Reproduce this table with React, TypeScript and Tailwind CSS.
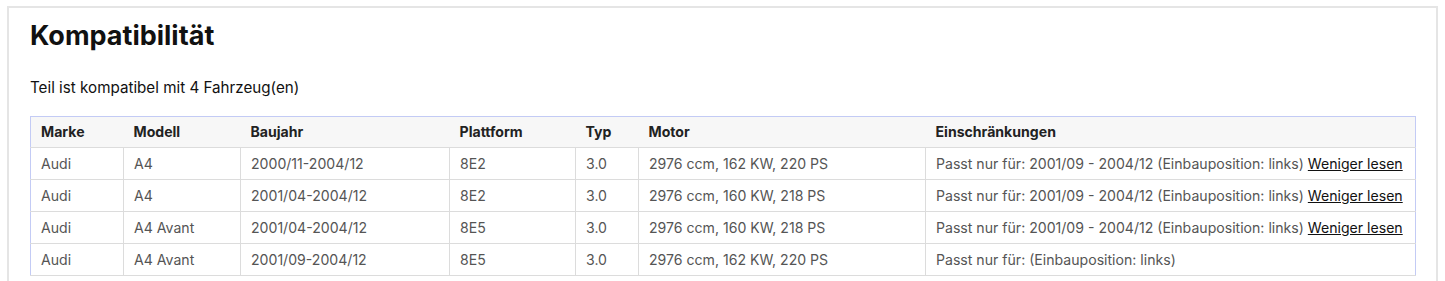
import React from "react";

const rows = [
  ["Audi", "A4", "2000/11-2004/12", "8E2", "3.0", "2976 ccm, 162 KW, 220 PS", "Passt nur für: 2001/09 - 2004/12 (Einbauposition: links)", true],
  ["Audi", "A4", "2001/04-2004/12", "8E2", "3.0", "2976 ccm, 160 KW, 218 PS", "Passt nur für: 2001/09 - 2004/12 (Einbauposition: links)", true],
  ["Audi", "A4 Avant", "2001/04-2004/12", "8E5", "3.0", "2976 ccm, 160 KW, 218 PS", "Passt nur für: 2001/09 - 2004/12 (Einbauposition: links)", true],
  ["Audi", "A4 Avant", "2001/09-2004/12", "8E5", "3.0", "2976 ccm, 162 KW, 220 PS", "Passt nur für: (Einbauposition: links)", false],
] as const;

const headers = ["Marke", "Modell", "Baujahr", "Plattform", "Typ", "Motor", "Einschränkungen"];
const widths = ["w-[93px]", "w-[117px]", "w-[209px]", "w-[126px]", "w-[63px]", "w-[287px]", "w-[490px]"];

export default function App() {
  return (
    <div className="bg-white min-h-[281px] pt-[6px] pl-[7px] font-['Inter',sans-serif]">
      <div className="w-[1431px] h-[300px] border-2 border-[#e5e5e5] pl-[21px] pt-[12px]">
        <h2 className="text-[27px] leading-[32px] font-bold text-[#111]">Kompatibilität</h2>
        <p className="mt-[24px] text-[15.2px] leading-[24px] text-[#111]">Teil ist kompatibel mit 4 Fahrzeug(en)</p>
        <table className="mt-[16px] table-fixed border-collapse border border-[#c3cbf5] w-[1386px] text-[14.1px]">
          <colgroup>
            {widths.map((w, i) => (
              <col key={i} className={w} />
            ))}
          </colgroup>
          <thead>
            <tr className="bg-[#f7f7f7] h-[31px]">
              {headers.map((h) => (
                <th key={h} className="text-left font-bold text-[#222] px-[10px] py-0 border-b border-[#dcdcdc]">
                  {h}
                </th>
              ))}
            </tr>
          </thead>
          <tbody>
            {rows.map((r, i) => (
              <tr key={i} className="h-[32px]">
                {r.slice(0, 7).map((c, j) => (
                  <td
                    key={j}
                    className={`px-[10px] py-0 text-[#555] border-b border-[#dcdcdc] ${j > 0 ? "border-l" : ""} whitespace-nowrap`}
                  >
                    {c as string}
                    {j === 6 && r[7] ? (
                      <>
                        {" "}
                        <a className="underline text-[#111]" href="#">Weniger lesen</a>
                      </>
                    ) : null}
                  </td>
                ))}
              </tr>
            ))}
          </tbody>
        </table>
      </div>
    </div>
  );
}
